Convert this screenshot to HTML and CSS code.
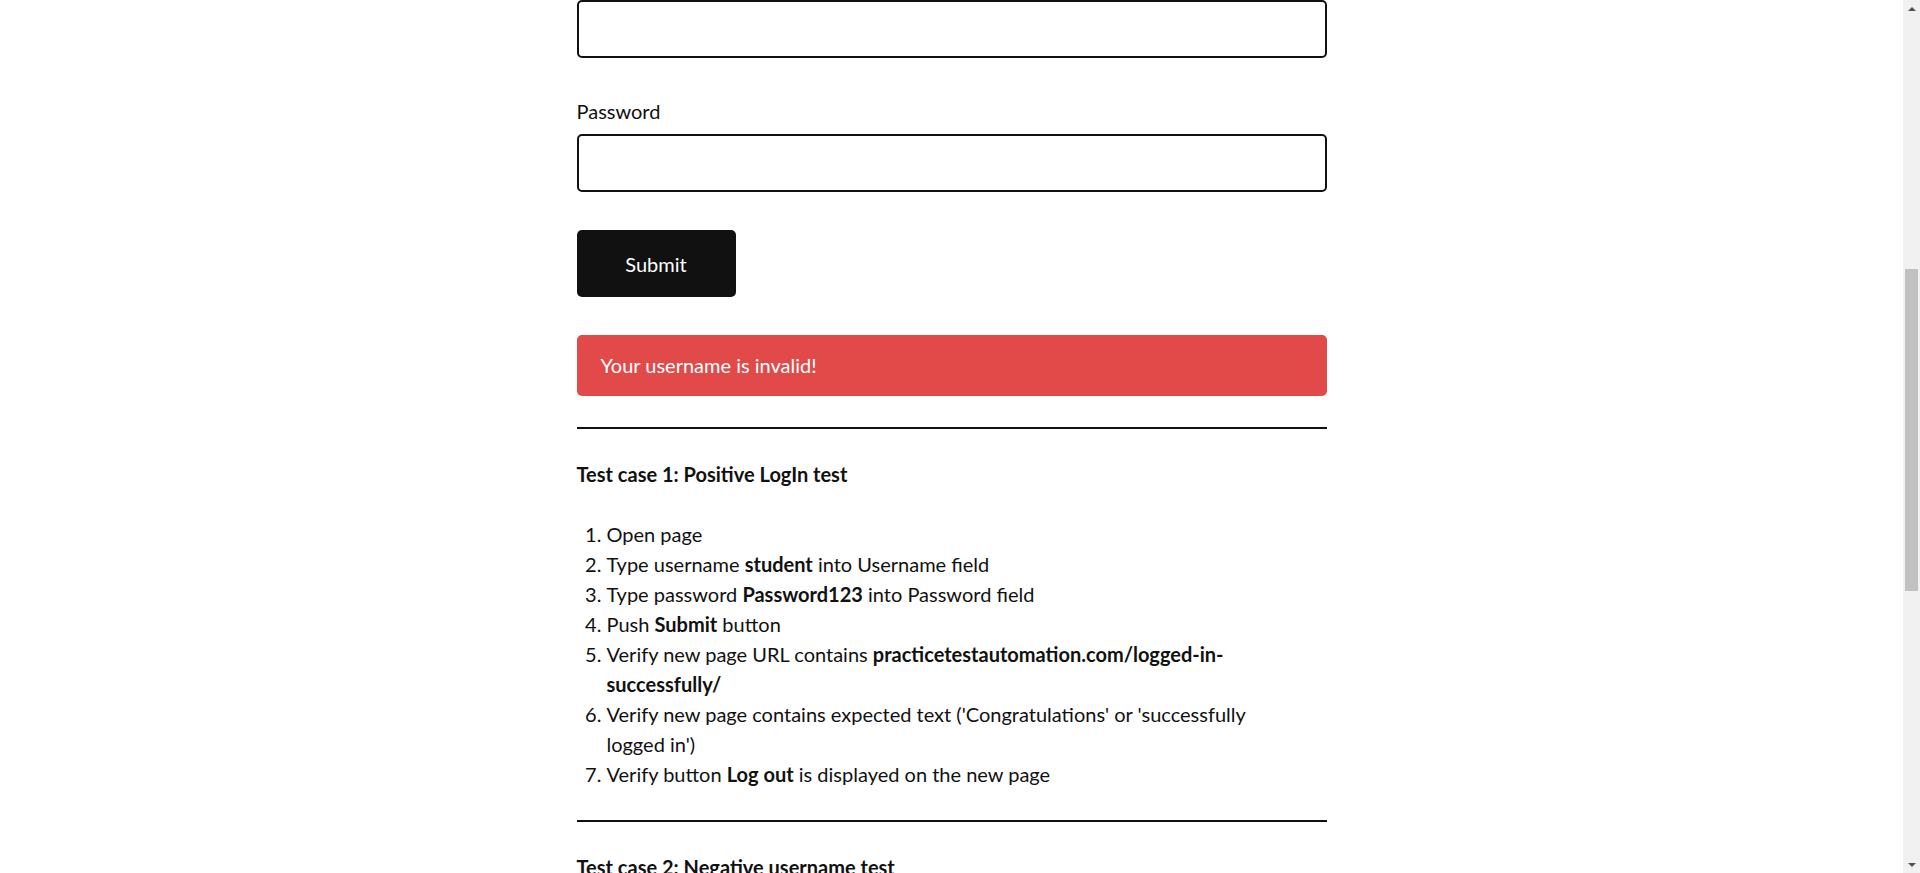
FILE: index.html
```html
<!DOCTYPE html>
<html lang="en">
<head>
    <meta charset="UTF-8">
    <meta name="viewport" content="width=device-width, initial-scale=1.0">
    <title>Test Login | Practice Test Automation</title>
    <link rel="stylesheet" href="styles.css">
</head>
<body>
    <header class="site-header">
        <div class="header-inner">
            <div class="logo">Practice Test Automation</div>
            <nav class="menu">
                <a href="#">Home</a>
                <a href="#">Practice</a>
                <a href="#">Courses</a>
                <a href="#">Blog</a>
                <a href="#">Contact</a>
            </nav>
        </div>
    </header>

    <main class="page-content">
        <h2 class="page-title">Test login</h2>
        <p>This is a simple Login page. Students can use this page to practice writing simple positive and negative LogIn tests. Login functionality is something that most of the test automation engineers need to automate.</p>
        <p>Use next credentials to execute Login:<br>Username: <strong>student</strong><br>Password: <strong>Password123</strong></p>

        <form class="login-form" onsubmit="return false;">
            <div class="form-group">
                <label for="username">Username</label>
                <input type="text" id="username" name="username">
            </div>
            <div class="form-group">
                <label for="password">Password</label>
                <input type="password" id="password" name="password">
            </div>
            <button class="btn" id="submit" type="submit">Submit</button>
        </form>

        <div id="error" class="error-box">Your username is invalid!</div>

        <hr>

        <p><strong>Test case 1: Positive LogIn test</strong></p>
        <ol>
            <li>Open page</li>
            <li>Type username <strong>student</strong> into Username field</li>
            <li>Type password <strong>Password123</strong> into Password field</li>
            <li>Push <strong>Submit</strong> button</li>
            <li>Verify new page URL contains <strong>practicetestautomation.com/logged-in-successfully/</strong></li>
            <li>Verify new page contains expected text ('Congratulations' or 'successfully logged in')</li>
            <li>Verify button <strong>Log out</strong> is displayed on the new page</li>
        </ol>

        <hr>

        <p><strong>Test case 2: Negative username test</strong></p>
        <ol>
            <li>Open page</li>
            <li>Type username <strong>incorrectUser</strong> into Username field</li>
            <li>Type password <strong>Password123</strong> into Password field</li>
            <li>Push <strong>Submit</strong> button</li>
            <li>Verify error message is displayed</li>
            <li>Verify error message text is <strong>Your username is invalid!</strong></li>
        </ol>

        <hr>

        <p><strong>Test case 3: Negative password test</strong></p>
        <ol>
            <li>Open page</li>
            <li>Type username <strong>student</strong> into Username field</li>
            <li>Type password <strong>incorrectPassword</strong> into Password field</li>
            <li>Push <strong>Submit</strong> button</li>
            <li>Verify error message is displayed</li>
            <li>Verify error message text is <strong>Your password is invalid!</strong></li>
        </ol>
    </main>

    <footer class="site-footer">
        <div class="footer-inner">
            <p>© Copyright 2020 Practice Test Automation</p>
        </div>
    </footer>

    <div class="scrollbar">
        <div class="scroll-arrow up"></div>
        <div class="scroll-track">
            <div class="scroll-thumb"></div>
        </div>
        <div class="scroll-arrow down"></div>
    </div>

    <script>
        // the screenshot shows the page scrolled down to the password field
        const firstInput = document.getElementById('username');
        const box = firstInput.getBoundingClientRect();
        window.scrollTo(0, box.bottom + window.scrollY - 58);
    </script>
</body>
</html>
```

FILE: styles.css
```css
body {
    margin: 0;
    padding-right: 17px;
    background-color: white;
    color: #111;
    font-family: Lato, "Open Sans", sans-serif;
    font-size: 20px;
    line-height: 30px;
}
.site-header {
    border-bottom: 1px solid #e5e5e5;
}
.header-inner {
    width: 1100px;
    margin: 0 auto;
    height: 120px;
    display: flex;
    align-items: center;
    justify-content: space-between;
}
.logo {
    font-size: 24px;
    font-weight: bold;
    text-transform: uppercase;
}
.menu {
    display: flex;
    gap: 36px;
}
.menu a {
    color: #111;
    text-decoration: none;
    text-transform: uppercase;
    font-size: 16px;
}
.page-content {
    width: 750px;
    margin: 0 auto;
    padding: 60px 0 120px;
}
.page-title {
    font-size: 40px;
    line-height: 48px;
    margin: 0 0 30px;
}
p {
    margin: 0 0 30px;
}
.login-form {
    margin-top: 40px;
}
.form-group {
    margin-bottom: 38px;
}
.form-group label {
    display: block;
    margin-bottom: 8px;
}
.form-group input {
    display: block;
    box-sizing: border-box;
    width: 100%;
    height: 58px;
    border: 2px solid #111;
    border-radius: 5px;
    padding: 0 16px;
    font-family: inherit;
    font-size: 20px;
    background: white;
}
.btn {
    display: block;
    width: 159px;
    height: 67px;
    background-color: #111;
    color: white;
    border: none;
    border-radius: 5px;
    font-family: inherit;
    font-size: 20px;
    margin-bottom: 38px;
}
.error-box {
    background-color: #e24a4a;
    color: white;
    border-radius: 5px;
    padding: 15px 24px 16px;
}
hr {
    border: none;
    border-top: 2px solid #111;
    margin: 31px 0 30px;
}
ol {
    margin: 0 0 30px;
    padding: 0 50px 0 30px;
}
.site-footer {
    background-color: #f5f5f5;
    border-top: 1px solid #e5e5e5;
}
.footer-inner {
    width: 1100px;
    margin: 0 auto;
    padding: 300px 0 100px;
    font-size: 15px;
    color: #555;
}

/* classic browser scrollbar, drawn over the right edge */
.scrollbar {
    position: fixed;
    top: 0;
    right: 0;
    width: 17px;
    height: 100vh;
    background-color: #f1f1f1;
    display: flex;
    flex-direction: column;
}
.scroll-arrow {
    height: 17px;
    display: flex;
    justify-content: center;
    align-items: center;
}
.scroll-arrow::before {
    content: "";
    width: 0;
    height: 0;
    border-left: 4px solid transparent;
    border-right: 4px solid transparent;
}
.scroll-arrow.up::before {
    border-bottom: 4px solid #505050;
}
.scroll-arrow.down::before {
    border-top: 4px solid #505050;
}
.scroll-track {
    flex: 1;
    padding: 252px 2px 0;
}
.scroll-thumb {
    height: 322px;
    background-color: #c1c1c1;
}
```
